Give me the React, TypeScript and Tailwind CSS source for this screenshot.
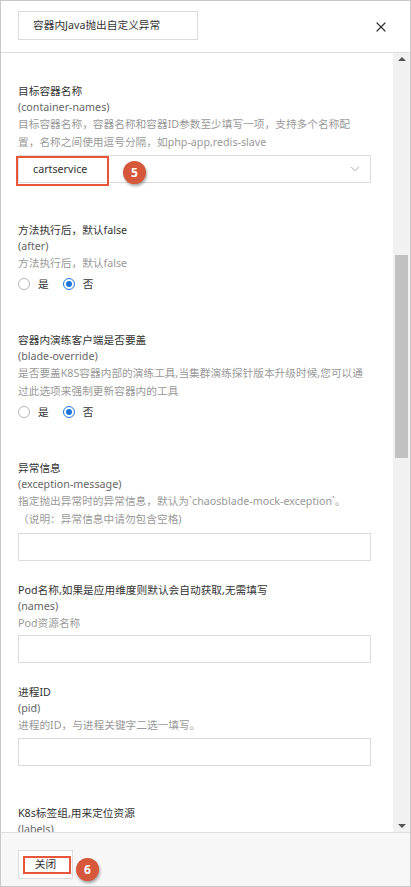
import { ChevronDown, X } from "lucide-react";

const font = { fontFamily: '"Noto Sans", "Noto Sans CJK SC", sans-serif' };

function Badge({ n, className }: { n: string; className: string }) {
  return (
    <span
      className={`absolute w-[23px] h-[23px] rounded-full bg-[#d6573a] text-white text-[12px] font-bold flex items-center justify-center shadow-[1px_2px_3px_rgba(0,0,0,0.35)] ${className}`}
    >
      {n}
    </span>
  );
}

function Label({ title, name, desc }: { title: string; name: string; desc: string[] }) {
  return (
    <>
      <div className="h-[16px] leading-[16px] text-[#333] whitespace-nowrap">{title}</div>
      <div className="h-[16px] leading-[16px] text-[#666] whitespace-nowrap">{name}</div>
      {desc.map((line) => (
        <div key={line} className="h-[18px] leading-[18px] text-[#999] whitespace-nowrap">
          {line}
        </div>
      ))}
    </>
  );
}

function Radios() {
  return (
    <div className="h-[24px] flex items-center text-[#333]">
      <span className="w-[12px] h-[12px] rounded-full border border-[#b5b5b5] bg-white" />
      <span className="ml-[8px]">是</span>
      <span className="ml-[14px] w-[12px] h-[12px] rounded-full border border-[#1a73d9] flex items-center justify-center">
        <span className="w-[6px] h-[6px] rounded-full bg-[#1a73d9]" />
      </span>
      <span className="ml-[8px]">否</span>
    </div>
  );
}

function Input({ className }: { className: string }) {
  return <div className={`h-[28px] border border-[#dcdcdc] bg-white ${className}`} />;
}

export default function App() {
  return (
    <div
      style={font}
      className="w-[411px] h-[887px] border border-[#c9c9c9] bg-white flex flex-col text-[10.7px] overflow-hidden"
    >
      <header className="h-[52px] shrink-0 border-b border-[#dedede] flex items-start justify-between pl-[17px] pr-[21px] pt-[10px]">
        <div className="w-[180px] h-[29px] border border-[#dcdcdc] pl-[14px] flex items-center text-[#333] whitespace-nowrap">
          容器内Java抛出自定义异常
        </div>
        <X size={16} strokeWidth={1.8} className="mt-[8px] text-[#333]" />
      </header>

      <div className="flex-1 min-h-0 flex">
        <div className="flex-1 overflow-hidden pl-[17px] pr-[22px] pt-[30px]">
          <Label
            title="目标容器名称"
            name="(container-names)"
            desc={[
              "目标容器名称，容器名称和容器ID参数至少填写一项，支持多个名称配",
              "置，名称之间使用逗号分隔，如php-app,redis-slave",
            ]}
          />
          <div className="relative mt-[4px] h-[28px] border border-[#dcdcdc] bg-white flex items-center justify-between pl-[14px] pr-[8px]">
            <span className="text-[#333]">cartservice</span>
            <ChevronDown size={14} strokeWidth={1.2} className="text-[#888]" />
            <span className="absolute left-[-3px] top-[0px] w-[93px] h-[30px] border-2 border-[#e8553a]" />
            <Badge n="5" className="left-[104px] top-[5px]" />
          </div>

          <div className="mt-[39px]">
            <Label title="方法执行后，默认false" name="(after)" desc={["方法执行后，默认false"]} />
            <Radios />
          </div>

          <div className="mt-[36px]">
            <Label
              title="容器内演练客户端是否要盖"
              name="(blade-override)"
              desc={[
                "是否要盖K8S容器内部的演练工具,当集群演练探针版本升级时候,您可以通",
                "过此选项来强制更新容器内的工具",
              ]}
            />
            <Radios />
          </div>

          <div className="mt-[36px]">
            <Label
              title="异常信息"
              name="(exception-message)"
              desc={[
                "指定抛出异常时的异常信息，默认为`chaosblade-mock-exception`。",
                "（说明：异常信息中请勿包含空格)",
              ]}
            />
            <Input className="mt-[5px]" />
          </div>

          <div className="mt-[21px]">
            <Label title="Pod名称,如果是应用维度则默认会自动获取,无需填写" name="(names)" desc={["Pod资源名称"]} />
            <Input className="mt-[3px]" />
          </div>

          <div className="mt-[21px]">
            <Label title="进程ID" name="(pid)" desc={["进程的ID，与进程关键字二选一填写。"]} />
            <Input className="mt-[4px]" />
          </div>

          <div className="mt-[39px]">
            <Label title="K8s标签组,用来定位资源" name="(labels)" desc={[]} />
          </div>
        </div>

        <div className="w-[17px] shrink-0 bg-[#f1f1f1] flex flex-col items-center">
          <span className="mt-[4px] w-0 h-0 border-l-[4px] border-r-[4px] border-b-[4px] border-l-transparent border-r-transparent border-b-[#555]" />
          <div className="mt-[194px] w-[13px] h-[203px] bg-[#c1c1c1]" />
          <div className="flex-1" />
          <span className="mb-[4px] w-0 h-0 border-l-[4px] border-r-[4px] border-t-[4px] border-l-transparent border-r-transparent border-t-[#555]" />
        </div>
      </div>

      <footer className="h-[54px] shrink-0 border-t border-[#dedede] bg-[#f7f7f7] pl-[17px] pt-[17px]">
        <div className="relative w-[55px] h-[29px] border border-[#dcdcdc] bg-white flex items-center justify-center text-[#333]">
          关闭
          <span className="absolute left-[4px] top-[5px] w-[48px] h-[18px] border-2 border-[#e8553a]" />
          <Badge n="6" className="left-[57px] top-[7px]" />
        </div>
      </footer>
    </div>
  );
}
